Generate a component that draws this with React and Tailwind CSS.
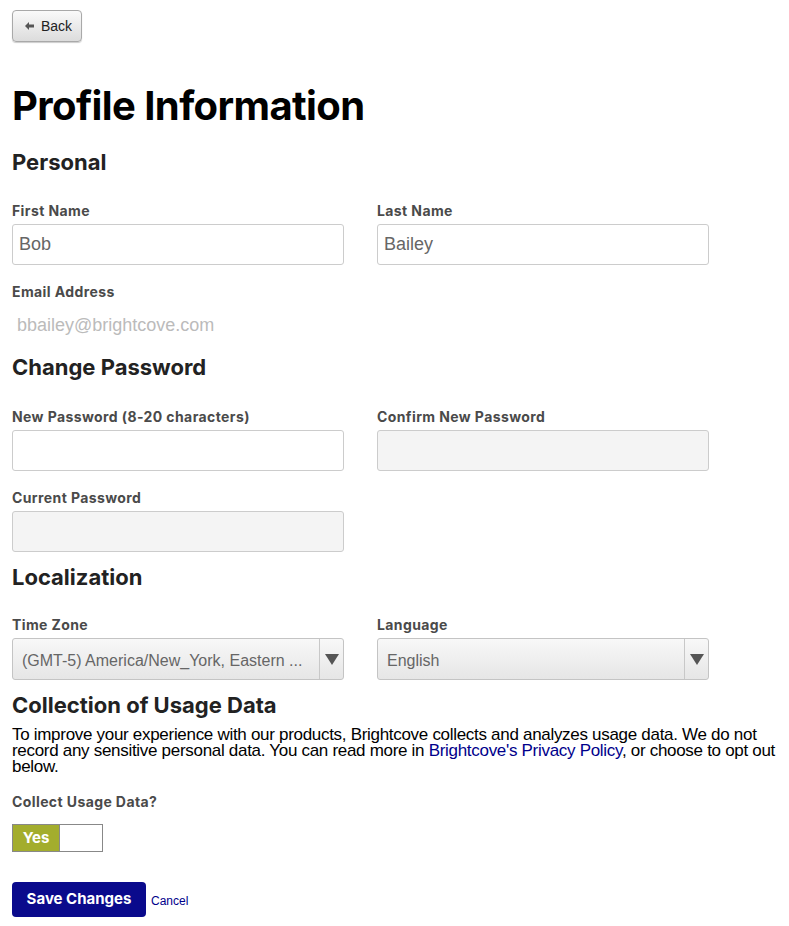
import React from "react";

const head = { fontFamily: "Inter, 'Noto Sans', sans-serif" };
const arial = { fontFamily: "'Liberation Sans', Arial, sans-serif" };

function Label({ children }) {
  return (
    <div className="text-[14px] font-bold text-[#4a4a4a] leading-[16px] tracking-[0.4px] mb-[5px]" style={head}>
      {children}
    </div>
  );
}

function TextInput({ value, disabled }) {
  return (
    <div
      className={`h-[41px] w-[332px] rounded-[3px] border border-[#cccccc] px-[6px] flex items-center text-[18px] text-[#666] ${
        disabled ? "bg-[#f4f4f4]" : "bg-white"
      }`}
      style={arial}
    >
      {value}
    </div>
  );
}

function Select({ value }) {
  return (
    <div
      className="h-[42px] w-[332px] rounded-[3px] border border-[#c4c4c4] bg-gradient-to-b from-[#f8f8f8] to-[#e6e6e6] flex items-stretch text-[16px] text-[#666]"
      style={arial}
    >
      <div className="flex-1 flex items-center pl-[9px] pt-[3px] whitespace-nowrap overflow-hidden">{value}</div>
      <div className="w-[24px] border-l border-[#c8c8c8] flex items-center justify-center">
        <svg width="14" height="12" viewBox="0 0 14 12">
          <path d="M0 1 L14 1 L7 12 Z" fill="#555" />
        </svg>
      </div>
    </div>
  );
}

export default function App() {
  return (
    <div className="bg-white min-h-[926px] w-[789px] px-[12px] pt-[10px] text-black">
      <button
        className="h-[32px] w-[70px] rounded-[4px] border border-[#a9a9a9] bg-gradient-to-b from-[#fafafa] to-[#dcdcdc] shadow-[0_1px_1px_rgba(0,0,0,0.2)] flex items-center pl-[12px] gap-[7px] text-[14px] text-[#222]"
        style={arial}
      >
        <svg width="9" height="8" viewBox="0 0 9 8">
          <path d="M0 4 L4 0 L4 2.5 L9 2.5 L9 5.5 L4 5.5 L4 8 Z" fill="#555" />
        </svg>
        Back
      </button>

      <h1 className="mt-[40px] text-[40px] font-bold leading-[48px] text-black tracking-[-0.6px]" style={head}>
        Profile Information
      </h1>

      <h2 className="mt-[19px] text-[22px] font-bold leading-[26px] text-[#222]" style={head}>
        Personal
      </h2>

      <div className="mt-[28px] grid grid-cols-[365px_332px] gap-y-[20px]">
        <div>
          <Label>First Name</Label>
          <TextInput value="Bob" />
        </div>
        <div>
          <Label>Last Name</Label>
          <TextInput value="Bailey" />
        </div>
      </div>

      <div className="mt-[19px]">
        <Label>Email Address</Label>
        <div className="pl-[5px] pt-[9px] text-[18px] leading-[22px] text-[#bbbbbb]" style={arial}>
          bbailey@brightcove.com
        </div>
      </div>

      <h2 className="mt-[18px] text-[22px] font-bold leading-[26px] text-[#222]" style={head}>
        Change Password
      </h2>

      <div className="mt-[29px] grid grid-cols-[365px_332px] gap-y-[19px]">
        <div>
          <Label>New Password (8-20 characters)</Label>
          <TextInput value="" />
        </div>
        <div>
          <Label>Confirm New Password</Label>
          <TextInput value="" disabled />
        </div>
        <div>
          <Label>Current Password</Label>
          <TextInput value="" disabled />
        </div>
      </div>

      <h2 className="mt-[12px] text-[22px] font-bold leading-[26px] text-[#222]" style={head}>
        Localization
      </h2>

      <div className="mt-[27px] grid grid-cols-[365px_332px]">
        <div>
          <Label>Time Zone</Label>
          <Select value="(GMT-5) America/New_York, Eastern ..." />
        </div>
        <div>
          <Label>Language</Label>
          <Select value="English" />
        </div>
      </div>

      <h2 className="mt-[12px] text-[22px] font-bold leading-[26px] text-[#222]" style={head}>
        Collection of Usage Data
      </h2>

      <p className="mt-[9px] text-[17px] leading-[16px] tracking-[-0.3px] text-black w-[775px]" style={arial}>
        To improve your experience with our products, Brightcove collects and analyzes usage data. We do not record
        any sensitive personal data. You can read more in{" "}
        <a className="text-[#00008b]">Brightcove's Privacy Policy</a>, or choose to opt out below.
      </p>

      <div className="mt-[19px]">
        <Label>Collect Usage Data?</Label>
      </div>
      <div className="mt-[14px] flex h-[28px] w-[91px] border border-[#888]">
        <div
          className="w-[47px] bg-[#a3ad2d] border-r border-[#888] text-white text-[15px] font-bold flex items-center justify-center"
          style={head}
        >
          Yes
        </div>
        <div className="flex-1 bg-white" />
      </div>

      <div className="mt-[30px] flex items-center gap-[5px]">
        <button className="h-[35px] w-[134px] rounded-[4px] bg-[#0a0a8c] text-white text-[15px] font-bold" style={head}>
          Save Changes
        </button>
        <a className="text-[12px] text-[#00008b] pt-[2px]" style={arial}>
          Cancel
        </a>
      </div>
    </div>
  );
}
